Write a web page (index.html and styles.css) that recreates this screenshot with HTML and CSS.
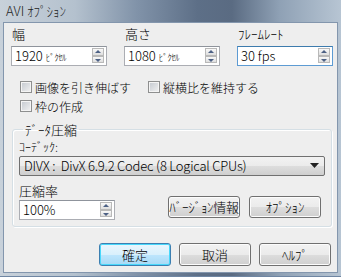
FILE: index.html
```html
<!DOCTYPE html>
<html lang="ja">
<head>
  <meta charset="UTF-8" />
  <title>AVI ｵﾌﾟｼｮﾝ</title>
  <link rel="stylesheet" href="styles.css">
</head>
<body>
  <div class="window">
    <div class="titlebar">AVI ｵﾌﾟｼｮﾝ</div>
    <div class="client">
      <div class="size-row">
        <div class="field">
          <label>幅</label>
          <div class="spin-input"><span>1920<small class="unit">ﾋﾟｸｾﾙ</small></span><i class="spin"><b class="up"></b><b class="down"></b></i></div>
        </div>
        <div class="field">
          <label>高さ</label>
          <div class="spin-input"><span>1080<small class="unit">ﾋﾟｸｾﾙ</small></span><i class="spin"><b class="up"></b><b class="down"></b></i></div>
        </div>
        <div class="field">
          <label>ﾌﾚｰﾑﾚｰﾄ</label>
          <div class="spin-input focused"><span>30 fps</span><i class="spin"><b class="up"></b><b class="down"></b></i></div>
        </div>
      </div>

      <div class="checks">
        <div class="check-row">
          <div class="check wide"><span class="box"></span>画像を引き伸ばす</div>
          <div class="check"><span class="box"></span>縦横比を維持する</div>
        </div>
        <div class="check-row">
          <div class="check"><span class="box"></span>枠の作成</div>
        </div>
      </div>

      <fieldset class="group">
        <legend>ﾃﾞｰﾀ圧縮</legend>
        <div class="small-label">ｺｰﾃﾞｯｸ:</div>
        <div class="combo">
          <span>DIVX :&nbsp; DivX 6.9.2 Codec (8 Logical CPUs)</span>
          <svg width="9" height="5" viewBox="0 0 9 5"><path d="M0 0h9L4.5 5z" fill="#222"/></svg>
        </div>
        <div class="rate-row">
          <div class="rate">
            <label>圧縮率</label>
            <div class="spin-input"><span>100%</span><i class="spin"><b class="up"></b><b class="down"></b></i></div>
          </div>
          <div class="group-buttons">
            <button class="btn narrow">ﾊﾞｰｼﾞｮﾝ情報</button>
            <button class="btn">ｵﾌﾟｼｮﾝ</button>
          </div>
        </div>
      </fieldset>

      <div class="actions">
        <button class="btn default">確定</button>
        <button class="btn">取消</button>
        <button class="btn">ﾍﾙﾌﾟ</button>
      </div>
    </div>
  </div>
</body>
</html>
```

FILE: styles.css
```css
body {
  margin: 0;
  font-family: "Noto Sans CJK JP", sans-serif;
  font-weight: 300;
  font-size: 12px;
  color: #000;
}

.window {
  width: 341px;
  height: 277px;
  box-sizing: border-box;
  display: flex;
  flex-direction: column;
  padding: 0 3px 3px 3px;
  background: linear-gradient(90deg, #c8d1da 0%, #b4c1ce 22%, #8193a9 40%, #5d6f87 58%, #5a6b82 68%, #8fa1b5 82%, #b7c5d3 100%);
  border-bottom: 1px solid #6f86a3;
}

.titlebar {
  height: 22px;
  line-height: 21px;
  padding-left: 3px;
  font-size: 13px;
  color: #1e1e1e;
}

.client {
  height: 252px;
  box-sizing: border-box;
  background: #eeeeee;
  border: 1px solid #8396ad;
  padding: 0;
}

.size-row {
  display: flex;
  gap: 17px;
  padding-left: 7px;
}

.field {
  width: 96px;
  display: flex;
  flex-direction: column;
}

.field label {
  height: 23px;
  line-height: 22px;
  padding-left: 1px;
  font-size: 13px;
}

.spin-input {
  height: 20px;
  box-sizing: border-box;
  border: 1px solid #abadb3;
  border-top-color: #8f949c;
  background: #fff;
  display: flex;
  align-items: center;
  justify-content: space-between;
  padding: 0 2px 0 3px;
  font-size: 13px;
}

.spin-input.focused {
  border-color: #5d9bd3;
  border-top-color: #3d7bad;
}

.unit {
  font-size: 9px;
  margin-left: 3px;
  letter-spacing: -0.6px;
}

.spin {
  width: 12px;
  height: 15px;
  display: flex;
  flex-direction: column;
}

.spin b {
  flex: 1;
  border: 1px solid #b9b9b9;
  background: linear-gradient(#f9f9f9, #dedede);
  position: relative;
}

.spin b::after {
  content: "";
  position: absolute;
  left: 2px;
  border-left: 3px solid transparent;
  border-right: 3px solid transparent;
}

.spin .up::after {
  top: 1px;
  border-bottom: 3px solid #4d6185;
}

.spin .down::after {
  top: 2px;
  border-top: 3px solid #4d6185;
}

.checks {
  padding: 12px 0 0 16px;
}

.check-row {
  display: flex;
  height: 19px;
  align-items: center;
}

.check {
  display: flex;
  align-items: center;
}

.check.wide {
  width: 128px;
}

.box {
  width: 12px;
  height: 12px;
  box-sizing: border-box;
  border: 1px solid #8e8f8f;
  background: linear-gradient(135deg, #c3c8cf, #f2f2f2);
  box-shadow: inset 0 0 0 1px #f4f4f4;
  margin-right: 3px;
}

.group {
  margin: 7px 5px 0 8px;
  border: 1px solid #d5dfe5;
  border-radius: 3px;
  padding: 0 6px 6px 6px;
  box-shadow: inset 1px 1px 0 #fff, 1px 1px 0 #fff;
}

.group legend {
  padding: 0 2px;
  margin-left: 4px;
  line-height: 14px;
  height: 14px;
  font-size: 13px;
}

.small-label {
  height: 19px;
  line-height: 20px;
}

.combo {
  height: 20px;
  box-sizing: border-box;
  border: 1px solid #707070;
  border-radius: 2px;
  background: linear-gradient(#f2f2f2 0%, #ebebeb 50%, #dddddd 51%, #cfcfcf 100%);
  display: flex;
  align-items: center;
  justify-content: space-between;
  padding: 0 5px 0 4px;
  font-size: 13px;
  letter-spacing: -0.2px;
  white-space: nowrap;
}

.rate-row {
  display: flex;
  align-items: flex-end;
  justify-content: space-between;
  padding-right: 4px;
}

.rate {
  width: 96px;
  display: flex;
  flex-direction: column;
}

.rate label {
  height: 20px;
  padding-top: 4px;
  line-height: 22px;
  font-size: 13px;
}

.group-buttons {
  display: flex;
  gap: 9px;
  padding-bottom: 2px;
}

.btn {
  width: 72px;
  height: 22px;
  font-family: inherit;
  font-weight: 300;
  font-size: 13px;
  padding: 0;
  white-space: nowrap;
  border: 1px solid #707070;
  border-radius: 3px;
  background: linear-gradient(#f2f2f2 0%, #ebebeb 50%, #dddddd 51%, #cfcfcf 100%);
  box-shadow: inset 0 0 0 1px #fcfcfc;
  color: #000;
}

.btn.narrow {
  letter-spacing: -0.3px;
}

.btn.default {
  border-color: #3c7fb1;
  background: linear-gradient(#eaf6fd 0%, #d9f0fc 50%, #bee6fd 51%, #a7d9f5 100%);
  box-shadow: inset 0 0 0 1px #48d8fb;
}

.actions {
  display: flex;
  justify-content: flex-end;
  gap: 8px;
  margin-top: 16px;
  padding-right: 6px;
}

.actions .btn {
  height: 23px;
}
```
